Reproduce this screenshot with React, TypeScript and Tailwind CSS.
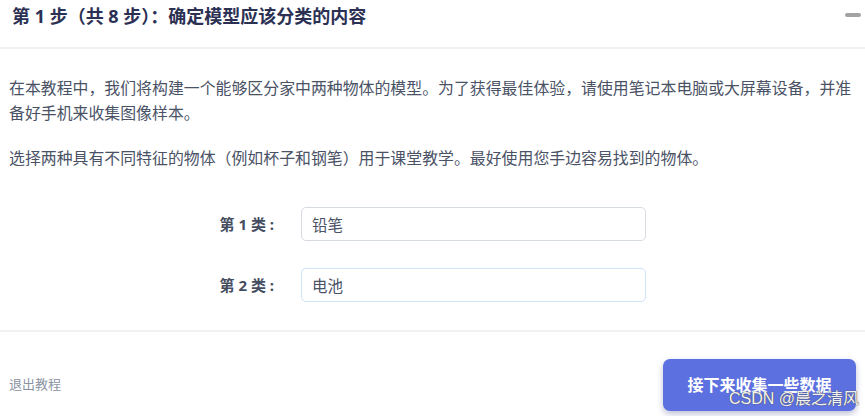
import React from "react";

const FONT = "font-['Noto_Sans','Noto_Sans_CJK_SC',sans-serif]";

// Une ligne du formulaire : libellé à gauche, champ à droite.
function Champ({ label, valeur, actif }: { label: string; valeur: string; actif?: boolean }) {
  return (
    <div className="flex items-center">
      <div className="w-[83px] pr-[27px] text-right text-[15px] font-bold text-[#454d61] whitespace-nowrap">{label}</div>
      <input
        readOnly
        value={valeur}
        className={`w-[345px] h-[34px] px-[10px] rounded-[5px] border bg-white text-[15.5px] text-[#4a5266] outline-none ${
          actif ? "border-[#cde3f8]" : "border-[#d6dbe2]"}`}
      />
    </div>
  );
}

export default function App() {
  return (
    <div className={`${FONT} relative w-[865px] h-[416px] bg-white overflow-hidden`}>
      {/* En-tête */}
      <div className="h-[49px] border-b-2 border-[#f1f1f3] flex items-start justify-between pl-[12px] pr-[4px]">
        <h1 className="mt-[3px] text-[18px] font-bold text-[#2c3154] leading-[26px]">第 1 步（共 8 步）：确定模型应该分类的内容</h1>
        <span className="mt-[13px] w-[16px] h-[4px] rounded-full bg-[#a3a3a3]" />
      </div>

      {/* Contenu */}
      <div className="px-[9px] pt-[27px] text-[15.9px] leading-[25px] text-[#4a5266]">
        <p>在本教程中，我们将构建一个能够区分家中两种物体的模型。为了获得最佳体验，请使用笔记本电脑或大屏幕设备，并准备好手机来收集图像样本。</p>
        <p className="mt-[20px]">选择两种具有不同特征的物体（例如杯子和钢笔）用于课堂教学。最好使用您手边容易找到的物体。</p>
      </div>

      <div className="mt-[36px] flex flex-col items-center gap-[27px] pr-[1px]">
        <Champ label="第 1 类 :" valeur="铅笔" />
        <Champ label="第 2 类 :" valeur="电池" actif />
      </div>

      <div className="mt-[28px] border-t-2 border-[#f1f1f3]" />

      {/* Pied */}
      <div className="flex items-center justify-between pl-[9px] pr-[9px] pt-[27px]">
        <span className="text-[13px] text-[#8b93a3]">退出教程</span>
        <button className="w-[193px] h-[52px] rounded-[7px] bg-[#5c70e0] text-white text-[16px] font-bold shadow-[0_3px_6px_rgba(40,50,120,0.3)]">
          接下来收集一些数据
        </button>
      </div>

      {/* Filigrane */}
      <span className="absolute left-[729px] top-[389px] font-['Liberation_Sans','Noto_Sans_CJK_SC',sans-serif] text-[16px] leading-[20px] text-[#f2f2f2] [text-shadow:0_0_1px_#555,0_0_1px_#555] whitespace-nowrap">
        CSDN @晨之清风
      </span>
    </div>
  );
}
